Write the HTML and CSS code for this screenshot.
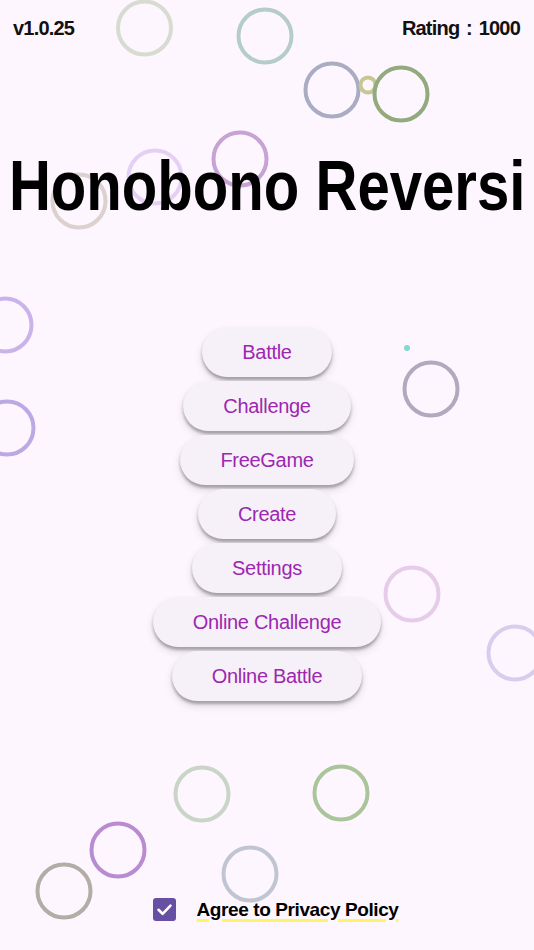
FILE: index.html
```html
<!DOCTYPE html>
<html>
<head>
<meta charset="utf-8">
<link rel="stylesheet" href="styles.css">
</head>
<body>
<div class="screen">
  <svg class="bubbles" width="534" height="950" viewBox="0 0 534 950">
    <g fill="none" stroke-width="4">
      <circle cx="144.5" cy="28" r="26.5" stroke="#d8dcd0"/>
      <circle cx="265" cy="36" r="26.5" stroke="#b6cccb"/>
      <circle cx="332" cy="90" r="26.5" stroke="#a9acc2"/>
      <circle cx="368" cy="85" r="7.5" stroke="#c8c694"/>
      <circle cx="401" cy="94" r="26.5" stroke="#93aa7e"/>
      <circle cx="155" cy="177" r="26.5" stroke="#e5d0f5"/>
      <circle cx="240" cy="159" r="26.5" stroke="#c7a2d5"/>
      <circle cx="79" cy="201" r="26.5" stroke="#ddd1cf"/>
      <circle cx="5" cy="325" r="26.5" stroke="#c9b3ea"/>
      <circle cx="7" cy="428" r="26.5" stroke="#baa9e3"/>
      <circle cx="431" cy="389" r="26.5" stroke="#b1a9be"/>
      <circle cx="412" cy="594" r="26.5" stroke="#e6cce9"/>
      <circle cx="515" cy="653" r="26.5" stroke="#d9cdee"/>
      <circle cx="202" cy="794" r="26.5" stroke="#c9d5c6"/>
      <circle cx="341" cy="793" r="26.5" stroke="#abc59b"/>
      <circle cx="118" cy="850" r="26.5" stroke="#b98cd2"/>
      <circle cx="64" cy="891" r="26.5" stroke="#b2ada6"/>
      <circle cx="250" cy="874" r="26.5" stroke="#c1c5d1"/>
    </g>
    <circle cx="407" cy="348" r="3" fill="#84d8d0"/>
  </svg>

  <header class="topbar">
    <span class="version">v1.0.25</span>
    <span class="rating">Rating : 1000</span>
  </header>

  <h1 class="title"><span class="title-text">Honobono Reversi</span></h1>

  <nav class="menu">
    <button class="btn">Battle</button>
    <button class="btn">Challenge</button>
    <button class="btn">FreeGame</button>
    <button class="btn">Create</button>
    <button class="btn">Settings</button>
    <button class="btn">Online Challenge</button>
    <button class="btn">Online Battle</button>
  </nav>

  <footer class="agree">
    <span class="checkbox">
      <svg width="23" height="23" viewBox="0 0 23 23"><path d="M5.5 11.8 L9.6 15.8 L17.5 7.6" fill="none" stroke="#fff" stroke-width="2.6" stroke-linecap="round" stroke-linejoin="round"/></svg>
    </span>
    <span class="policy">Agree to Privacy Policy</span>
  </footer>
</div>
</body>
</html>
```

FILE: styles.css
```css
html, body {
  margin: 0;
  padding: 0;
  background: #fdf6fe;
}

.screen {
  position: relative;
  width: 534px;
  height: 950px;
  overflow: hidden;
  display: flex;
  flex-direction: column;
  font-family: "Liberation Sans", Arial, sans-serif;
}

.bubbles {
  position: absolute;
  left: 0;
  top: 0;
  z-index: 0;
}

.topbar {
  position: relative;
  z-index: 1;
  display: flex;
  justify-content: space-between;
  align-items: center;
  height: 56px;
  padding: 0 14px 0 13px;
  font-size: 20px;
  font-weight: bold;
  color: #111;
  letter-spacing: -0.8px;
  word-spacing: 2px;
}

.title {
  position: relative;
  z-index: 1;
  display: flex;
  justify-content: center;
  margin: 95px 0 0 0;
  height: 70px;
  line-height: 70px;
  font-size: 70px;
  font-weight: bold;
  color: #000;
  white-space: nowrap;
}

.title-text {
  display: block;
  flex: none;
  transform: scaleX(0.83);
  transform-origin: center;
}

.menu {
  position: relative;
  z-index: 1;
  display: flex;
  flex-direction: column;
  align-items: center;
  gap: 4px;
  margin-top: 106px;
}

.btn {
  height: 50px;
  padding: 0 40px;
  border: none;
  border-radius: 25px;
  background: #f6f1f8;
  color: #9c27b0;
  font-family: "Liberation Sans", Arial, sans-serif;
  font-size: 20px;
  letter-spacing: -0.3px;
  box-shadow: 0 3px 3px rgba(0, 0, 0, 0.28), 0 5px 9px rgba(0, 0, 0, 0.12);
}

.agree {
  position: relative;
  z-index: 1;
  margin-top: auto;
  margin-bottom: 29px;
  display: flex;
  align-items: center;
  justify-content: center;
  gap: 20px;
  padding-left: 18px;
}

.checkbox {
  width: 23px;
  height: 23px;
  border-radius: 3px;
  background: #6750a4;
  display: block;
}

.checkbox svg {
  display: block;
}

.policy {
  font-size: 19px;
  font-weight: bold;
  color: #000;
  letter-spacing: -0.4px;
  text-decoration: underline;
  text-decoration-color: #fff36a;
  text-decoration-thickness: 3px;
  text-underline-offset: 3px;
}
```
